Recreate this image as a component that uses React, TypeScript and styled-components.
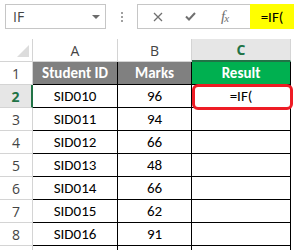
import React from 'react'
import styled, { createGlobalStyle } from 'styled-components'

const GlobalStyle = createGlobalStyle`
  body {
    margin: 0;
    background: #ffffff;
    font-family: Carlito, Lato, "Liberation Sans", sans-serif;
  }
`

const Colors = {
  border: '#c6c6c6',
  grid: '#d4d4d4',
  headerBg: '#e6e6e6',
  excelGreen: '#217346',
  resultGreen: '#00b050',
  darkGrey: '#808080',
  icon: '#707070',
  red: '#ee1c25',
}

const Page = styled.div`
  width: 304px;
  height: 250px;
  overflow: hidden;
  position: relative;
`

const TopBar = styled.div`
  display: flex;
  align-items: center;
  height: 39px;
  padding: 4px 0 10px 5px;
  box-sizing: border-box;
`

const NameBox = styled.div`
  width: 101px;
  height: 25px;
  box-sizing: border-box;
  border: 1px solid ${Colors.border};
  display: flex;
  align-items: center;
  justify-content: space-between;
  padding: 0 5px 0 7px;
  font-family: "Open Sans", sans-serif;
  font-size: 14px;
  color: #444;
`

const Caret = styled.span`
  width: 0;
  height: 0;
  border-left: 4px solid transparent;
  border-right: 4px solid transparent;
  border-top: 4px solid #6b6b6b;
`

const Dots = styled.div`
  width: 31px;
  display: flex;
  flex-direction: column;
  align-items: center;
  gap: 2px;
  span {
    width: 2px;
    height: 2px;
    background: #a0a0a0;
  }
`

const FormulaBox = styled.div`
  width: 113px;
  height: 25px;
  box-sizing: border-box;
  border: 1px solid ${Colors.border};
  border-right: none;
  display: flex;
  align-items: center;
  padding-left: 15px;
`

const IconSlot = styled.div<{ w: number }>`
  width: ${p => p.w}px;
  display: flex;
  align-items: center;
`

const Fx = styled.span`
  font-family: "Liberation Serif", serif;
  font-style: italic;
  font-size: 15px;
  color: ${Colors.icon};
  letter-spacing: -1px;
  sub {
    font-size: 11px;
    vertical-align: -1px;
  }
`

const Highlight = styled.div`
  width: 44px;
  height: 25px;
  background: #ffff00;
  display: flex;
  align-items: center;
  justify-content: center;
  font-size: 15px;
  color: #000;
`

const Sheet = styled.div`
  display: grid;
  grid-template-columns: 33px 85px 74px 99px;
  grid-auto-rows: 23px;
`

const Corner = styled.div`
  position: relative;
  box-sizing: border-box;
  border-right: 1px solid ${Colors.grid};
  border-bottom: 1px solid ${Colors.grid};
  &::after {
    content: '';
    position: absolute;
    right: 3px;
    bottom: 4px;
    width: 0;
    height: 0;
    border-left: 12px solid transparent;
    border-bottom: 12px solid #dcdcdc;
  }
`

const ColHead = styled.div<{ active?: boolean }>`
  box-sizing: border-box;
  display: flex;
  align-items: center;
  justify-content: center;
  font-family: "Open Sans", sans-serif;
  font-size: 14px;
  color: ${p => (p.active ? Colors.excelGreen : '#444')};
  font-weight: ${p => (p.active ? 700 : 400)};
  background: ${p => (p.active ? Colors.headerBg : '#fff')};
  border-right: 1px solid ${Colors.grid};
  border-bottom: ${p => (p.active ? `2px solid ${Colors.excelGreen}` : `1px solid ${Colors.grid}`)};
`

const RowHead = styled.div<{ active?: boolean }>`
  box-sizing: border-box;
  display: flex;
  align-items: center;
  justify-content: center;
  font-family: "Open Sans", sans-serif;
  font-size: 14px;
  color: ${p => (p.active ? Colors.excelGreen : '#444')};
  font-weight: ${p => (p.active ? 700 : 400)};
  background: ${p => (p.active ? Colors.headerBg : '#fff')};
  border-bottom: 1px solid ${Colors.grid};
  border-right: ${p => (p.active ? `2px solid ${Colors.excelGreen}` : `1px solid ${Colors.grid}`)};
`

const Cell = styled.div<{ bg?: string; bold?: boolean }>`
  box-sizing: border-box;
  display: flex;
  align-items: center;
  justify-content: center;
  font-size: 15px;
  color: ${p => (p.bg ? '#fff' : '#000')};
  font-weight: ${p => (p.bold ? 700 : 400)};
  background: ${p => p.bg || '#fff'};
  border-right: 1px solid #000;
  border-bottom: 1px solid #000;
`

const Selection = styled.div`
  position: absolute;
  left: 192px;
  top: 84px;
  width: 101px;
  height: 26px;
  box-sizing: border-box;
  border: 3px solid ${Colors.red};
  border-radius: 6px;
`

const rows = [
  ['SID010', '96'],
  ['SID011', '94'],
  ['SID012', '66'],
  ['SID013', '48'],
  ['SID014', '66'],
  ['SID015', '62'],
  ['SID016', '91'],
]

export default function App() {
  return (
    <Page>
      <GlobalStyle />
      <TopBar>
        <NameBox>
          IF
          <Caret />
        </NameBox>
        <Dots>
          <span />
          <span />
          <span />
        </Dots>
        <FormulaBox>
          <IconSlot w={32}>
            <svg width="10" height="10" viewBox="0 0 10 10">
              <path d="M1 1 L9 9 M9 1 L1 9" stroke={Colors.icon} strokeWidth="1.3" />
            </svg>
          </IconSlot>
          <IconSlot w={36}>
            <svg width="11" height="9" viewBox="0 0 11 9">
              <path d="M1 4.5 L4 7.5 L10 1" stroke={Colors.icon} strokeWidth="2" fill="none" />
            </svg>
          </IconSlot>
          <IconSlot w={20}>
            <Fx>
              f<sub>x</sub>
            </Fx>
          </IconSlot>
        </FormulaBox>
        <Highlight>=IF(</Highlight>
      </TopBar>
      <Sheet>
        <Corner />
        <ColHead>A</ColHead>
        <ColHead>B</ColHead>
        <ColHead active>C</ColHead>

        <RowHead>1</RowHead>
        <Cell bg={Colors.darkGrey} bold>Student ID</Cell>
        <Cell bg={Colors.darkGrey} bold>Marks</Cell>
        <Cell bg={Colors.resultGreen} bold>Result</Cell>

        {rows.map((r, i) => (
          <React.Fragment key={i}>
            <RowHead active={i === 0}>{i + 2}</RowHead>
            <Cell>{r[0]}</Cell>
            <Cell>{r[1]}</Cell>
            <Cell>{i === 0 ? '=IF(' : ''}</Cell>
          </React.Fragment>
        ))}
        {/* next row is only partly in view */}
        <RowHead />
        <Cell />
        <Cell />
        <Cell />
      </Sheet>
      <Selection />
    </Page>
  )
}
